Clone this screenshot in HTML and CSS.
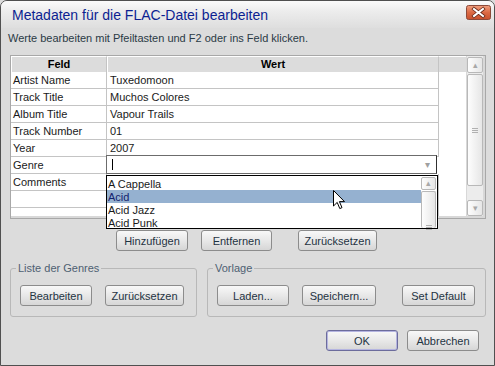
FILE: index.html
```html
<!doctype html>
<html lang="de">
<head>
	<meta charset="utf-8" />
	<title>Metadaten für die FLAC-Datei bearbeiten</title>
	<link rel="stylesheet" href="styles.css">
</head>
<body>
	<div class="window">
		<div class="titlebar">
			<span class="title">Metadaten für die FLAC-Datei bearbeiten</span>
			<span class="close">
				<svg width="25" height="15" viewBox="0 0 25 15">
					<defs>
						<linearGradient id="cg" x1="0" y1="0" x2="0" y2="1">
							<stop offset="0" stop-color="#f0a080" />
							<stop offset="0.5" stop-color="#dc6a44" />
							<stop offset="1" stop-color="#c8502c" />
						</linearGradient>
					</defs>
					<rect x="0.5" y="0.5" width="24" height="14" rx="2" fill="url(#cg)" stroke="#8c4a3a" />
					<path d="M8 4 L17 11 M17 4 L8 11" stroke="#6a2a1a" stroke-width="3.6" stroke-linecap="square" />
					<path d="M8 4 L17 11 M17 4 L8 11" stroke="#ffffff" stroke-width="2" stroke-linecap="square" />
				</svg>
			</span>
		</div>

		<p class="hint">Werte bearbeiten mit Pfeiltasten und F2 oder ins Feld klicken.</p>

		<div class="grid-frame">
			<div class="grid">
				<div class="row head">
					<div class="c1">Feld</div>
					<div class="c2">Wert</div>
					<div class="c3"></div>
				</div>
				<div class="row"><div class="c1">Artist Name</div><div class="c2">Tuxedomoon</div><div class="c3"></div></div>
				<div class="row"><div class="c1">Track Title</div><div class="c2">Muchos Colores</div><div class="c3"></div></div>
				<div class="row"><div class="c1">Album Title</div><div class="c2">Vapour Trails</div><div class="c3"></div></div>
				<div class="row"><div class="c1">Track Number</div><div class="c2">01</div><div class="c3"></div></div>
				<div class="row"><div class="c1">Year</div><div class="c2">2007</div><div class="c3"></div></div>
				<div class="row">
					<div class="c1">Genre</div>
					<div class="c2 edit">
						<div class="combo">
							<span class="caret"></span>
							<span class="drop">&#9662;</span>
						</div>
					</div>
					<div class="c3"></div>
				</div>
				<div class="row"><div class="c1">Comments</div><div class="c2"></div><div class="c3"></div></div>
				<div class="row"><div class="c1"></div><div class="c2"></div><div class="c3"></div></div>
				<div class="row"><div class="c1"></div><div class="c2"></div><div class="c3"></div></div>
			</div>

			<div class="vscroll">
				<div class="sbtn up">&#9652;</div>
				<div class="thumb"><span class="grip"></span></div>
				<div class="track"></div>
				<div class="sbtn down">&#9662;</div>
			</div>

			<div class="dropdown">
				<ul class="items">
					<li>A Cappella</li>
					<li class="sel">Acid</li>
					<li>Acid Jazz</li>
					<li>Acid Punk</li>
				</ul>
				<div class="vscroll small">
					<div class="sbtn up">&#9652;</div>
					<div class="thumb"><span class="grip low"></span></div>
				</div>
			</div>
		</div>

		<div class="actions">
			<button class="btn w72">Hinzufügen</button>
			<button class="btn w71 gap13">Entfernen</button>
			<button class="btn w79 gap26">Zurücksetzen</button>
		</div>

		<div class="groups">
			<fieldset class="group genres">
				<legend>Liste der Genres</legend>
				<button class="btn w72">Bearbeiten</button>
				<button class="btn w79 gap13">Zurücksetzen</button>
			</fieldset>
			<fieldset class="group preset">
				<legend>Vorlage</legend>
				<button class="btn w72">Laden...</button>
				<button class="btn w74 gap13">Speichern...</button>
				<button class="btn w73 gap26">Set Default</button>
			</fieldset>
		</div>

		<div class="footer">
			<button class="btn w72 default">OK</button>
			<button class="btn w72 gap9">Abbrechen</button>
		</div>

		<svg class="pointer" width="13" height="20" viewBox="0 0 13 20">
			<path d="M0.5 0.5 L0.5 16 L4.2 12.4 L6.8 18.6 L9 17.6 L6.4 11.6 L11.5 11.6 Z" fill="#ffffff" stroke="#000000" stroke-width="1" />
		</svg>
	</div>
</body>
</html>
```

FILE: styles.css
```css
body {
	margin: 0;
	background-color: #dcdcdc;
	font-family: "Liberation Sans", Arial, sans-serif;
	font-size: 11px;
	color: #1e2e3c;
}

.window {
	position: relative;
	width: 495px;
	height: 366px;
	box-sizing: border-box;
	border: 1px solid #505050;
	border-radius: 7px 7px 0 0;
	background-color: #dcdcdc;
	overflow: hidden;
}

.titlebar {
	display: flex;
	align-items: center;
	height: 27px;
	padding: 0 0 0 11px;
	background: linear-gradient(#fbfbfb, #ececec 40%, #dedede);
}

.title {
	flex: 1;
	font-size: 14px;
	color: #0c1f92;
}

.close {
	display: flex;
	margin: -5px 3px 0 0;
}

.hint {
	margin: 0;
	height: 27px;
	box-sizing: border-box;
	padding: 2px 0 0 7px;
	line-height: 16px;
	font-size: 11px;
	color: #2a3a45;
}

.grid-frame {
	position: relative;
	display: flex;
	width: 476px;
	height: 164px;
	box-sizing: border-box;
	margin-left: 9px;
	border: 1px solid #a8a8a8;
	padding: 0 2px 2px 0;
	background-color: #d8d8d8;
}

.grid {
	flex: 1;
	background-color: #fff;
	overflow: hidden;
	color: #1a1a1a;
}

.row {
	display: flex;
	height: 17px;
	box-sizing: border-box;
	line-height: 16px;
}

.row .c1 {
	width: 96px;
	padding-left: 2px;
	box-sizing: border-box;
	border-right: 1px solid #c4c4c4;
	border-bottom: 1px solid #c4c4c4;
}

.row .c2 {
	width: 332px;
	padding-left: 3px;
	box-sizing: border-box;
	border-right: 1px solid #c4c4c4;
	border-bottom: 1px solid #c4c4c4;
}

.row .c3 {
	flex: 1;
}

.row.head {
	height: 16px;
	background-color: #dcdcdc;
	font-weight: bold;
	color: #000;
	line-height: 15px;
}

.row.head .c1,
.row.head .c2 {
	padding: 0;
	text-align: center;
	border-left: 1px solid #fff;
	border-top: 1px solid #fff;
	border-bottom: none;
	border-right: 1px solid #c4c4c4;
}

.row.head .c3 {
	border-top: 1px solid #fff;
}

.row .c2.edit {
	position: relative;
	padding: 0;
	border-bottom: none;
	border-right: none;
}

.combo {
	position: absolute;
	left: -1px;
	top: -2px;
	width: 331px;
	height: 19px;
	box-sizing: border-box;
	border: 1px solid #6c6c6c;
	border-right-color: #303030;
	background-color: #fff;
}

.caret {
	position: absolute;
	left: 5px;
	top: 3px;
	width: 1px;
	height: 11px;
	background-color: #000;
}

.drop {
	position: absolute;
	right: 6px;
	top: 0;
	font-size: 10px;
	line-height: 17px;
	color: #a0a0a0;
}

.vscroll {
	display: flex;
	flex-direction: column;
	width: 16px;
	margin-left: 1px;
	padding-top: 1px;
	background-color: #ececec;
}

.sbtn,
.thumb {
	box-sizing: border-box;
	border: 1px solid #b8b8b8;
	border-radius: 2px;
	background: linear-gradient(to right, #fdfdfd, #e6e6e6);
}

.sbtn {
	height: 16px;
	font-size: 9px;
	line-height: 14px;
	text-align: center;
	color: #a8a8a8;
}

.thumb {
	position: relative;
	height: 112px;
	margin-top: 1px;
}

.grip {
	position: absolute;
	left: 4px;
	top: 53px;
	width: 6px;
	height: 5px;
	border-top: 1px solid #b0b0b0;
	border-bottom: 1px solid #b0b0b0;
	box-sizing: border-box;
}

.grip::after {
	content: "";
	position: absolute;
	left: 0;
	top: 1px;
	width: 6px;
	height: 1px;
	background-color: #b0b0b0;
}

.track {
	flex: 1;
}

.dropdown {
	position: absolute;
	left: 95px;
	top: 119px;
	display: flex;
	width: 332px;
	height: 54px;
	box-sizing: border-box;
	border: 1px solid #000;
	background-color: #fff;
}

.items {
	flex: 1;
	margin: 0;
	padding: 1px 0 0;
	list-style: none;
	color: #1a1a1a;
}

.items li {
	height: 13px;
	line-height: 14px;
	padding-left: 1px;
}

.items li.sel {
	background-color: #95b1d0;
	color: #14226e;
}

.vscroll.small {
	width: 15px;
	margin: 0 1px 0 0;
	padding-top: 1px;
	background-color: #fff;
}

.vscroll.small .sbtn {
	height: 13px;
	line-height: 11px;
}

.vscroll.small .thumb {
	flex: 1;
	height: auto;
	border-bottom: none;
}

.grip.low {
	top: auto;
	bottom: -2px;
}

.btn {
	height: 21px;
	box-sizing: border-box;
	margin: 0;
	padding: 0;
	border: 1px solid #8c8c8c;
	border-radius: 3px;
	background: linear-gradient(#f8f8f8, #e8e8e8 50%, #d6d6d6);
	font-family: "Liberation Sans", Arial, sans-serif;
	font-size: 11px;
	color: #1f3342;
}

.btn.default {
	border-color: #6c6c9c;
	box-shadow: inset 0 0 0 1px #b4b4e0;
}

.w71 { width: 71px; }
.w72 { width: 72px; }
.w73 { width: 73px; }
.w74 { width: 74px; }
.w79 { width: 79px; }
.gap9 { margin-left: 9px; }
.gap13 { margin-left: 13px; }
.gap26 { margin-left: 26px; }

.actions {
	display: flex;
	margin: 11px 0 0 115px;
}

.groups {
	display: flex;
	margin: 10px 0 0 9px;
}

.group {
	display: flex;
	align-items: flex-start;
	height: 56px;
	box-sizing: border-box;
	margin: 0;
	padding: 10px 0 0 9px;
	border: 1px solid #b8b8b8;
	border-radius: 3px;
}

.group legend {
	margin-left: -4px;
	padding: 0 2px;
	font-size: 11px;
	line-height: 14px;
	color: #4e6072;
}

.genres {
	width: 187px;
}

.preset {
	width: 279px;
	margin-left: 10px;
}

.footer {
	display: flex;
	justify-content: flex-end;
	margin: 13px 15px 0 0;
}

.pointer {
	position: absolute;
	left: 332px;
	top: 189px;
}
```
